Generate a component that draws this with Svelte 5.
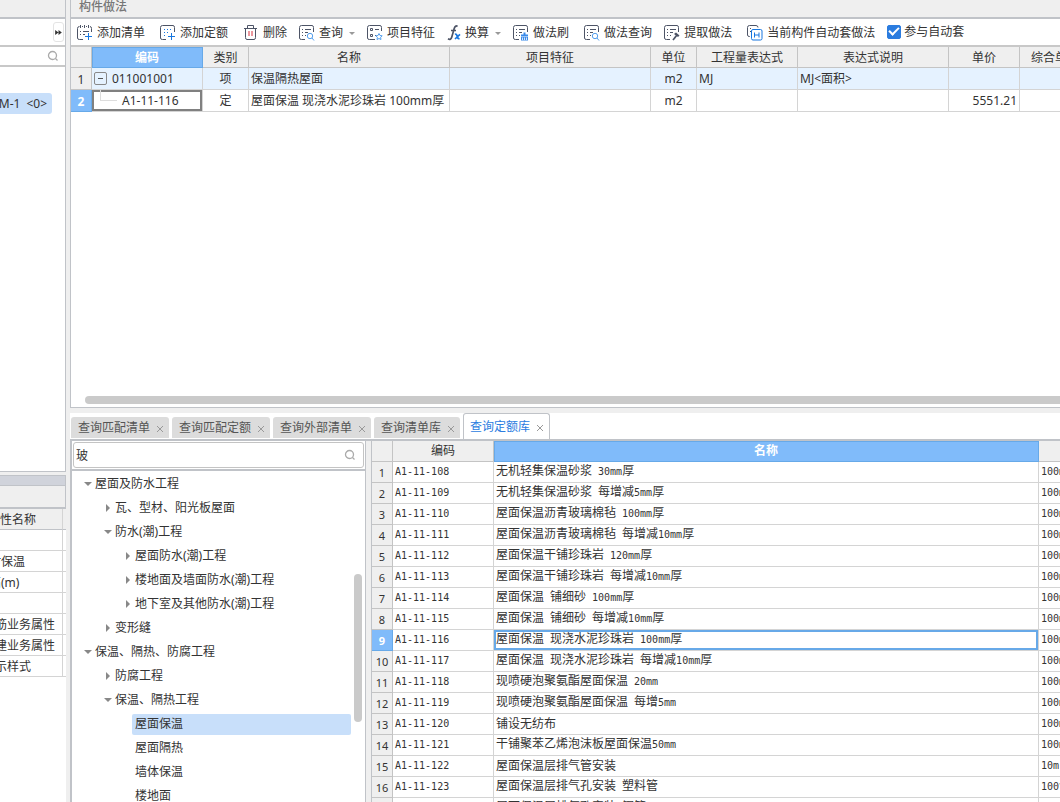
<script lang="ts">
    type Tool = { icon: string, label: string, menu?: boolean, spaced?: boolean }

    const tools: Tool[] = [
        { icon: 'list', label: '添加清单', spaced: true },
        { icon: 'quota', label: '添加定额', spaced: true },
        { icon: 'trash', label: '删除' },
        { icon: 'search', label: '查询', menu: true },
        { icon: 'feature', label: '项目特征' },
        { icon: 'fx', label: '换算', menu: true },
        { icon: 'brush', label: '做法刷', spaced: true },
        { icon: 'search', label: '做法查询' },
        { icon: 'extract', label: '提取做法', spaced: true },
        { icon: 'auto', label: '当前构件自动套做法' }
    ]

    const columns = ['编码', '类别', '名称', '项目特征', '单位', '工程量表达式', '表达式说明', '单价', '综合单价']

    const properties = [
        { name: '', child: false },
        { name: '材保温', child: true },
        { name: '高(m)', child: true },
        { name: '', child: false },
        { name: '筋业务属性', child: false },
        { name: '建业务属性', child: false },
        { name: '示样式', child: false }
    ]

    const tree = [
        { label: '屋面及防水工程', level: 0, state: 'open' },
        { label: '瓦、型材、阳光板屋面', level: 1, state: 'closed' },
        { label: '防水(潮)工程', level: 1, state: 'open' },
        { label: '屋面防水(潮)工程', level: 2, state: 'closed' },
        { label: '楼地面及墙面防水(潮)工程', level: 2, state: 'closed' },
        { label: '地下室及其他防水(潮)工程', level: 2, state: 'closed' },
        { label: '变形缝', level: 1, state: 'closed' },
        { label: '保温、隔热、防腐工程', level: 0, state: 'open' },
        { label: '防腐工程', level: 1, state: 'closed' },
        { label: '保温、隔热工程', level: 1, state: 'open' },
        { label: '屋面保温', level: 2, state: 'leaf' },
        { label: '屋面隔热', level: 2, state: 'leaf' },
        { label: '墙体保温', level: 2, state: 'leaf' },
        { label: '楼地面', level: 2, state: 'leaf' }
    ]

    const tabs = ['查询匹配清单', '查询匹配定额', '查询外部清单', '查询清单库', '查询定额库']

    const quotas = [
        ['A1-11-108', '无机轻集保温砂浆 30mm厚', '100m2'],
        ['A1-11-109', '无机轻集保温砂浆 每增减5mm厚', '100m2'],
        ['A1-11-110', '屋面保温沥青玻璃棉毡 100mm厚', '100m2'],
        ['A1-11-111', '屋面保温沥青玻璃棉毡 每增减10mm厚', '100m2'],
        ['A1-11-112', '屋面保温干铺珍珠岩 120mm厚', '100m2'],
        ['A1-11-113', '屋面保温干铺珍珠岩 每增减10mm厚', '100m2'],
        ['A1-11-114', '屋面保温 铺细砂 100mm厚', '100m2'],
        ['A1-11-115', '屋面保温 铺细砂 每增减10mm厚', '100m2'],
        ['A1-11-116', '屋面保温 现浇水泥珍珠岩 100mm厚', '100m2'],
        ['A1-11-117', '屋面保温 现浇水泥珍珠岩 每增减10mm厚', '100m2'],
        ['A1-11-118', '现喷硬泡聚氨酯屋面保温 20mm', '100m2'],
        ['A1-11-119', '现喷硬泡聚氨酯屋面保温 每增5mm', '100m2'],
        ['A1-11-120', '铺设无纺布', '100m2'],
        ['A1-11-121', '干铺聚苯乙烯泡沫板屋面保温50mm', '100m2'],
        ['A1-11-122', '屋面保温层排气管安装', '10m'],
        ['A1-11-123', '屋面保温层排气孔安装 塑料管', '100个'],
        ['A1-11-124', '屋面保温层排气孔安装 钢管', '100个']
    ]

    let activeTab = $state('查询定额库')
    let activeNode = $state('屋面保温')
    let activeQuota = $state('A1-11-116')
    let keyword = $state('玻')
    let autoApply = $state(true)

    // split a name into half-width and full-width runs
    function runs(text: string) {
        return text.match(/[\x20-\x7e]+|[^\x20-\x7e]+/g) ?? []
    }

    function isHalf(text: string) {
        return /^[\x20-\x7e]/.test(text)
    }
</script>

{#snippet sheet()}
    <path d="M6 14.500H2.500Q.500 14.500 .500 13V2.500Q.500 .500 2.500 .500H13Q14.500 .500 14.500 2.500V7" />
{/snippet}

{#snippet lines()}
    <path d="M3 4.500H4M6 4.500H12M3 7.500H4M6 7.500H9M3 10.500H4M6 10.500H7" />
{/snippet}

{#snippet toolIcon(name: string)}
    <svg class="tool-icon" class:narrow={name === 'fx'} viewBox={name === 'fx' ? '0 0 14 16' : '0 0 16 16'} aria-hidden="true">
        {#if name === 'list'}
            <path d="M6 14.500H2.500Q.500 14.500 .500 13V3.500Q.500 1.500 2.500 1.500M14.500 7V3.500Q14.500 1.500 13 1.500M3.500 0V3M7.500 0V3M11.500 0V3M5 1.500H6M9 1.500H10M3 6.500H4M6 6.500H12M3 9.500H4M6 9.500H8" />
            <path class="blue" d="M11.500 8V15M8 11.500H15" />
        {:else if name === 'quota'}
            {@render sheet()}
            <path class="blue" d="M4 4.500H5M7 4.500H8M10 4.500H11M4 7.500H5M7 7.500H8M4 10.500H5M11.500 8V15M8 11.500H15" />
        {:else if name === 'trash'}
            <path d="M1 3.500H14M4.500 3V.500H10.500V3M2.500 4V12.500Q2.500 14.500 4 14.500H11Q12.500 14.500 12.500 12.500V4" />
            <path class="red" d="M6 6V11M9 6V11" />
        {:else if name === 'search'}
            {@render sheet()}
            {@render lines()}
            <circle class="sky" cx="11" cy="11" r="2.700" />
            <path class="sky" d="M13 13L15 15.500" />
        {:else if name === 'feature'}
            <path d="M8 14.500H2.500Q.500 14.500 .500 13V2.500Q.500 .500 2.500 .500H13Q14.500 .500 14.500 2.500V6M3.500 3.500H5.500V5.500H3.500ZM3.500 9.500H5.500V11.500H3.500ZM8 4.500H12M8 10.500H9" />
            <path class="sky" d="M12 8.500L13 10.500L15.200 10.800L13.600 12.300L14 14.500L12 13.500L10 14.500L10.400 12.300L8.800 10.800L11 10.500Z" />
        {:else if name === 'fx'}
            <path class="thick" d="M10.500 1.500Q8.300 -.200 7.200 3.500L4.800 12Q3.800 15.500 1 13.800M4 5.500H9" />
            <path class="blue thick" d="M8 9.500Q9.600 8.500 10 11T12.500 14M13 9.300L8 14" />
        {:else if name === 'brush'}
            {@render sheet()}
            {@render lines()}
            <path class="blue-fill" d="M10.500 7.500H12.500V9.500H15V11.500H8V9.500H10.500ZM8 12H15V15.500H8Z" />
            <path class="light" d="M9.500 12.500V15M11.500 12.500V15M13.500 12.500V15" />
        {:else if name === 'extract'}
            {@render sheet()}
            {@render lines()}
            <path class="thick" d="M13 10L9 15" />
            <path class="dark-fill" d="M10 9L12 7.500L15.500 10.500L14 12Z" />
        {:else if name === 'auto'}
            <path d="M3 11.500H2.500Q.500 11.500 .500 10V2.500Q.500 .500 2.500 .500H9Q11 .500 11 2.500M3 3.500H4M3 6.500H4" />
            <rect class="blue" x="4.500" y="4.500" width="10.500" height="10.500" rx="1.500" />
            <path class="blue" d="M7.500 7.500V12.500M12 7.500V12.500M7.500 10H12" />
        {/if}
    </svg>
{/snippet}

{#snippet magnifier()}
    <svg class="magnifier" viewBox="0 0 12 12" aria-hidden="true">
        <circle cx="5.500" cy="5.500" r="4" />
        <path d="M8.500 8.500L10.500 10.500" />
    </svg>
{/snippet}

<div class="workspace">
    <aside class="side">
        <section class="components">
            <div class="caption"></div>
            <div class="side-tools">
                <button class="expand" aria-label="展开">
                    <svg viewBox="0 0 8 6" aria-hidden="true"><path d="M0 0L4 3L0 6ZM4 0L8 3L4 6Z" /></svg>
                </button>
            </div>
            <div class="side-search">
                <input type="text" aria-label="搜索构件" />
                {@render magnifier()}
            </div>
            <button class="component-item"><span>M-1</span><span>&lt;0&gt;</span></button>
        </section>

        <section class="properties">
            <div class="properties-bar"></div>
            <div class="properties-caption"></div>
            <table>
                <colgroup><col /><col class="cut" /></colgroup>
                <thead>
                    <tr><th>性名称</th><th></th></tr>
                </thead>
                <tbody>
                    {#each properties as property}
                        <tr>
                            <td class:child={property.child}>{property.name}</td>
                            <td></td>
                        </tr>
                    {/each}
                </tbody>
            </table>
        </section>
    </aside>

    <main>
        <section class="methods">
            <h1>构件做法</h1>
            <div class="toolbar">
                {#each tools as tool}
                    <button class="tool" class:spaced={tool.spaced}>
                        {@render toolIcon(tool.icon)}
                        {tool.label}
                        {#if tool.menu}
                            <span class="caret"></span>
                        {/if}
                    </button>
                {/each}
                <label class="auto-apply">
                    <input type="checkbox" bind:checked={autoApply} />
                    参与自动套
                </label>
            </div>

            <table class="grid method-grid">
                <colgroup>
                    <col class="w-index" />
                    <col class="w-code" />
                    <col class="w-small" />
                    <col class="w-name" />
                    <col class="w-name" />
                    <col class="w-small" />
                    <col class="w-expr" />
                    <col class="w-note" />
                    <col class="w-price" />
                    <col class="w-price" />
                </colgroup>
                <thead>
                    <tr>
                        <th></th>
                        {#each columns as column, i}
                            <th class:current={i === 0}>{column}</th>
                        {/each}
                    </tr>
                </thead>
                <tbody>
                    <tr class="item">
                        <th>1</th>
                        <td><div class="code"><button class="fold" aria-label="折叠"></button>011001001</div></td>
                        <td class="center">项</td>
                        <td>保温隔热屋面</td>
                        <td></td>
                        <td class="center">m2</td>
                        <td>MJ</td>
                        <td>MJ&lt;面积&gt;</td>
                        <td></td>
                        <td></td>
                    </tr>
                    <tr>
                        <th class="current">2</th>
                        <td class="editing"><div class="code"><span class="branch"></span>A1-11-116</div></td>
                        <td class="center">定</td>
                        <td>屋面保温 现浇水泥珍珠岩 100mm厚</td>
                        <td></td>
                        <td class="center">m2</td>
                        <td></td>
                        <td></td>
                        <td class="number">5551.21</td>
                        <td></td>
                    </tr>
                </tbody>
            </table>
            <div class="scroll-x"></div>
        </section>

        <section class="library">
            <nav class="tabs">
                {#each tabs as tab}
                    <button class="tab" class:active={tab === activeTab} onclick={() => activeTab = tab}>
                        {tab}
                        <svg viewBox="0 0 6 6" aria-hidden="true"><path d="M0 0L6 6M6 0L0 6" /></svg>
                    </button>
                {/each}
            </nav>

            <div class="library-body">
                <div class="catalog">
                    <div class="catalog-search">
                        <input type="text" aria-label="查询章节" bind:value={keyword} />
                        {@render magnifier()}
                    </div>
                    <div class="tree-wrap">
                        <ul class="tree">
                            {#each tree as node}
                                <li class="level-{node.level}">
                                    <span class="arrow {node.state}"></span>
                                    <button class:selected={node.label === activeNode} onclick={() => activeNode = node.label}>
                                        {node.label}
                                    </button>
                                </li>
                            {/each}
                        </ul>
                        <div class="scroll-y"></div>
                    </div>
                </div>

                <div class="quota-wrap">
                    <table class="grid quota-grid">
                        <colgroup>
                            <col class="w-index" />
                            <col class="w-quota" />
                            <col />
                            <col class="w-unit" />
                        </colgroup>
                        <thead>
                            <tr><th></th><th>编码</th><th class="current">名称</th><th></th></tr>
                        </thead>
                        <tbody>
                            {#each quotas as [code, name, unit], i}
                                <tr onclick={() => activeQuota = code}>
                                    <th class:current={code === activeQuota}>{i + 1}</th>
                                    <td><span class="half">{code}</span></td>
                                    <td class:picked={code === activeQuota}>
                                        {#each runs(name) as run}<span class:half={isHalf(run)}>{run}</span>{/each}
                                    </td>
                                    <td>
                                        {#each runs(unit) as run}<span class:half={isHalf(run)}>{run}</span>{/each}
                                    </td>
                                </tr>
                            {/each}
                        </tbody>
                    </table>
                </div>
            </div>
        </section>
    </main>
</div>

<style>
    :global(body) {
        overflow: hidden;
    }
    * {
        box-sizing: border-box;
    }
    .workspace {
        display: grid;
        grid-template-columns: 66px minmax(0, 1fr);
        column-gap: 4px;
        height: 100vh;
        overflow: hidden;
        background: #efefef;
        color: #333;
        font-family: "Noto Sans", "Noto Sans CJK SC", sans-serif;
        font-size: 12px;
        line-height: 16px;
    }
    button, input {
        font: inherit;
        color: inherit;
        margin: 0;
        padding: 0;
        border: none;
        background: none;
        outline: none;
    }
    button {
        white-space: nowrap;
        cursor: pointer;
    }
    svg {
        flex: none;
        fill: none;
    }
    table {
        border-collapse: separate;
        border-spacing: 0;
        table-layout: fixed;
    }
    th, td {
        padding: 0;
        font-weight: 400;
        white-space: nowrap;
        overflow: hidden;
    }

    /* left column */
    .side {
        display: grid;
        grid-template-rows: 472px minmax(0, 1fr);
        row-gap: 3px;
        overflow: hidden;
    }
    .components {
        background: #fff;
        border-right: 1px solid #c0c3c8;
        border-bottom: 1px solid #c0c3c8;
        overflow: hidden;
    }
    .caption {
        height: 19px;
        background: #efefef;
        border-bottom: 2px solid #c0c3c8;
    }
    .side-tools {
        display: flex;
        justify-content: flex-end;
        align-items: center;
        height: 28px;
        padding-right: 1px;
        border-bottom: 2px solid #c8c8c8;
    }
    .expand {
        display: flex;
        align-items: center;
        justify-content: center;
        width: 11px;
        height: 20px;
        border: 1px solid #e4e4e4;
        border-radius: 3px;
    }
    .expand svg {
        width: 7px;
        height: 5px;
        fill: #333;
    }
    .side-search {
        display: flex;
        align-items: center;
        height: 20px;
        padding-right: 6px;
        border-bottom: 2px solid #c8c8c8;
    }
    .side-search input {
        flex: 1;
        min-width: 0;
    }
    .magnifier {
        width: 12px;
        height: 12px;
        stroke: #aaa;
        stroke-width: 1.3;
    }
    .component-item {
        display: flex;
        align-items: center;
        justify-content: flex-end;
        gap: 6px;
        width: 52px;
        height: 21px;
        margin-top: 26px;
        padding-right: 5px;
        border-radius: 0 3px 3px 0;
        background: #c8dffa;
    }
    .properties {
        background: #fff;
        overflow: hidden;
    }
    .properties-bar {
        height: 11px;
        background: #d0d3db;
        border: 1px solid #c0c3c8;
        border-left: none;
    }
    .properties-caption {
        height: 23px;
        background: #efefef;
        border-right: 1px solid #c0c3c8;
        border-bottom: 2px solid #c0c3c8;
    }
    .properties table {
        width: 100%;
    }
    .cut {
        width: 3px;
    }
    .properties th, .properties td {
        height: 21px;
        padding-top: 2px;
        text-align: left;
        border-bottom: 1px solid #d4d4d4;
    }
    .properties th {
        background: #efefef;
        border-bottom-color: #c0c3c8;
    }
    .properties th:first-child, .properties td:first-child {
        border-right: 1px solid #d4d4d4;
    }
    .properties td {
        text-indent: -5px;
    }
    .properties td.child {
        text-indent: -11px;
    }

    /* upper pane */
    main {
        display: grid;
        grid-template-rows: 408px minmax(0, 1fr);
        row-gap: 5px;
        min-width: 0;
    }
    .methods {
        display: flex;
        flex-direction: column;
        background: #fff;
        border-left: 1px solid #c0c3c8;
        border-bottom: 1px solid #c0c3c8;
        overflow: hidden;
    }
    h1 {
        flex: none;
        height: 19px;
        margin: 0;
        padding-left: 8px;
        background: #efefef;
        border-bottom: 2px solid #c0c3c8;
        color: #777;
        font-size: 12px;
        font-weight: 500;
        line-height: 14px;
    }
    .toolbar {
        flex: none;
        display: flex;
        align-items: center;
        gap: 12px;
        height: 28px;
        padding: 2px 0 0 6px;
        border-bottom: 2px solid #c8c8c8;
    }
    .tool {
        display: flex;
        align-items: center;
        gap: 4px;
    }
    .tool.spaced {
        margin-right: 3px;
    }
    .tool-icon {
        width: 16px;
        height: 16px;
        stroke: #4d5466;
    }
    .tool-icon.narrow {
        width: 14px;
    }
    .tool-icon .thick {
        stroke-width: 1.7;
    }
    .tool-icon .blue {
        stroke: #1877e0;
    }
    .tool-icon .sky {
        stroke: #55a0ee;
    }
    .tool-icon .red {
        stroke: #d8303c;
    }
    .tool-icon .blue-fill {
        fill: #3b8bea;
        stroke: none;
    }
    .tool-icon .dark-fill {
        fill: #4d5466;
        stroke: none;
    }
    .tool-icon .light {
        stroke: #d8e8fc;
    }
    .caret {
        margin-left: 2px;
        border: 3px solid transparent;
        border-top: 3px solid #999;
        border-bottom: none;
    }
    .auto-apply {
        display: flex;
        align-items: center;
        gap: 3px;
        padding-bottom: 3px;
        white-space: nowrap;
    }
    .auto-apply input {
        display: grid;
        place-items: center;
        width: 14px;
        height: 14px;
        appearance: none;
        border: 1px solid #2b7cdf;
        border-radius: 2px;
    }
    .auto-apply input:checked {
        background: #2b7cdf;
    }
    .auto-apply input:checked::before {
        content: "";
        width: 8px;
        height: 4px;
        margin-bottom: 3px;
        border-left: 2px solid #fff;
        border-bottom: 2px solid #fff;
        transform: rotate(-45deg);
    }

    .grid th, .grid td {
        border-right: 1px solid #d4d4d4;
        border-bottom: 1px solid #d4d4d4;
    }
    .grid th {
        background: #efefef;
        border-color: #c4c4c4;
    }
    .grid th.current {
        background: #80bbfa;
        border-color: #67a9e8;
        color: #fff;
        font-weight: 700;
    }
    .grid thead th.current {
        box-shadow: inset 1px 1px #67a9e8;
    }
    .method-grid {
        flex: none;
        width: 1020px;
    }
    .w-index { width: 21px; }
    .w-code { width: 111px; }
    .w-small { width: 46px; }
    .w-name { width: 201px; }
    .w-expr { width: 101px; }
    .w-note { width: 151px; }
    .w-price { width: 71px; }
    .w-quota { width: 101px; }
    .w-unit { width: 61px; }
    .method-grid th {
        height: 21px;
        padding-top: 2px;
    }
    .method-grid td {
        height: 22px;
        padding-left: 2px;
    }
    .method-grid td.center {
        padding: 0;
        text-align: center;
    }
    .method-grid td.number {
        padding-right: 2px;
        text-align: right;
    }
    .item td {
        background: #e5f2ff;
    }
    .method-grid td.editing {
        padding-left: 0;
        box-shadow: inset 0 0 0 2px #808080;
    }
    .code {
        display: flex;
        align-items: center;
        height: 21px;
    }
    .fold {
        display: grid;
        place-items: center;
        width: 13px;
        height: 13px;
        margin-right: 5px;
        border: 1px solid #888;
        border-radius: 2px;
    }
    .fold::before {
        content: "";
        width: 5px;
        height: 1px;
        background: #555;
    }
    .branch {
        align-self: flex-start;
        width: 17px;
        height: 11px;
        margin: 0 5px 0 8px;
        border-left: 1px solid #ddd;
        border-bottom: 1px solid #ddd;
    }
    .scroll-x {
        flex: none;
        height: 8px;
        margin: auto 0 3px 14px;
        border-radius: 4px 0 0 4px;
        background: #cacaca;
    }

    /* lower pane */
    .library {
        display: flex;
        flex-direction: column;
        min-width: 0;
    }
    .tabs {
        flex: none;
        display: flex;
        align-items: flex-end;
        gap: 3px;
        height: 28px;
        padding-left: 1px;
        background: #fff;
        border-bottom: 2px solid #c0c3c8;
    }
    .tab {
        display: flex;
        align-items: center;
        gap: 7px;
        height: 21px;
        margin-bottom: 1px;
        padding: 0 6px 0 7px;
        border-radius: 3px 3px 0 0;
        background: #dcdcdc;
        color: #555;
    }
    .tab svg {
        width: 6px;
        height: 6px;
        margin-top: 2px;
        stroke: #999;
    }
    .tab.active {
        height: 26px;
        margin-bottom: 0;
        padding: 0 6px;
        border: 1px solid #c0c3c8;
        border-bottom: none;
        background: #fff;
        color: #2b7cdf;
    }
    .library-body {
        flex: 1;
        display: grid;
        grid-template-columns: 296px minmax(0, 1fr);
        column-gap: 5px;
        min-height: 0;
    }
    .catalog {
        display: flex;
        flex-direction: column;
        min-height: 0;
        border-left: 2px solid #c0c3c8;
        border-right: 1px solid #c0c3c8;
        background: #fff;
    }
    .catalog-search {
        flex: none;
        display: flex;
        height: 30px;
        padding: 1px;
        border-bottom: 2px solid #c0c3c8;
        align-items: center;
    }
    .catalog-search input {
        flex: 1;
        min-width: 0;
        height: 26px;
        padding: 0 30px 0 2px;
        border: 1px solid #c4c4c4;
        border-radius: 3px;
    }
    .catalog-search .magnifier {
        margin: 0 8px 0 -20px;
    }
    .tree-wrap {
        flex: 1;
        display: flex;
        min-height: 0;
        overflow: hidden;
    }
    .tree {
        flex: 1;
        margin: 0;
        padding: 1px 3px 0 12px;
        list-style: none;
    }
    .tree li {
        display: flex;
        align-items: center;
        height: 24px;
    }
    .tree li button {
        flex: 1;
        height: 21px;
        padding-left: 3px;
        border-radius: 2px;
        text-align: left;
    }
    .tree li button.selected {
        background: #c8dffa;
    }
    .tree .level-1 {
        padding-left: 20px;
    }
    .tree .level-2 {
        padding-left: 40px;
    }
    .arrow {
        display: flex;
        justify-content: center;
        width: 8px;
    }
    .arrow.open::before {
        content: "";
        border: 4px solid transparent;
        border-top-color: #888;
        border-bottom: none;
    }
    .arrow.closed::before {
        content: "";
        border: 4px solid transparent;
        border-left-color: #888;
        border-right: none;
    }
    .scroll-y {
        flex: none;
        width: 8px;
        height: 148px;
        margin: 103px 3px 0 0;
        border-radius: 4px;
        background: #cacaca;
    }
    .quota-wrap {
        min-height: 0;
        border-left: 1px solid #c0c3c8;
        background: #fff;
        overflow: hidden;
    }
    /* the unit column runs past the right edge */
    .quota-grid {
        width: calc(100% + 40px);
    }
    .quota-grid th, .quota-grid td {
        height: 21px;
    }
    .quota-grid td {
        padding: 0 0 2px 2px;
        font-family: "Noto Sans CJK SC", sans-serif;
        line-height: 14px;
    }
    .quota-grid tbody th {
        padding-top: 2px;
        font-size: 11px;
    }
    .quota-grid td.picked {
        box-shadow: inset 0 0 0 2px #67a9e8;
    }
    .half {
        font-family: "DejaVu Sans Mono", monospace;
        font-size: 10px;
        white-space: pre;
    }
</style>
